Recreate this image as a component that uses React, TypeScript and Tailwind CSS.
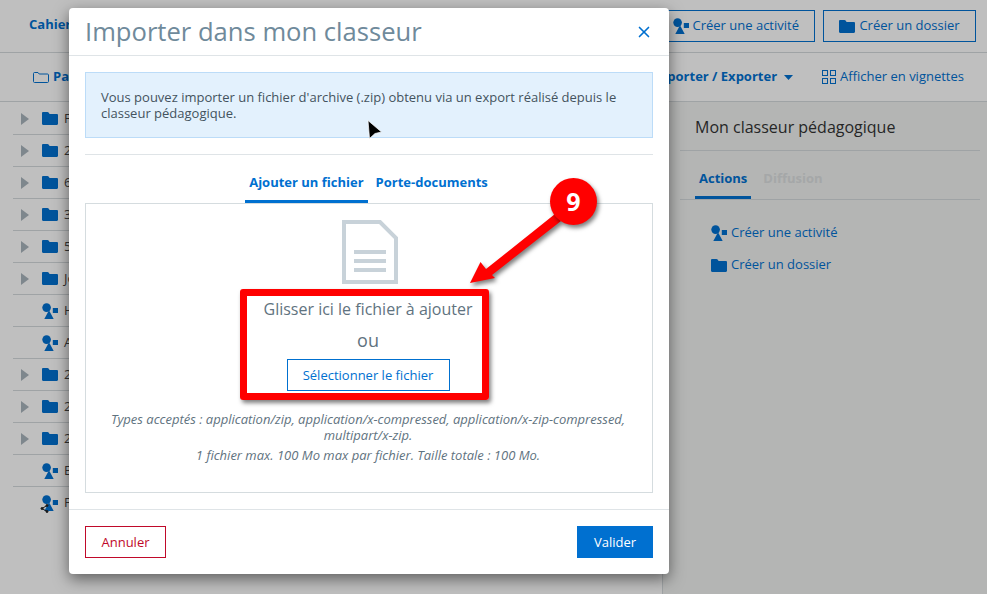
import { X } from "lucide-react";

function FolderIcon({ className }: { className?: string }) {
  return (
    <svg viewBox="0 0 16 13" className={className} fill="currentColor">
      <path d="M0 1.2C0 .5.5 0 1.2 0h4.2c.5 0 .9.2 1.2.6L7.6 2h7.2c.7 0 1.2.5 1.2 1.2v8.6c0 .7-.5 1.2-1.2 1.2H1.2C.5 13 0 12.500 0 11.800z" />
    </svg>
  );
}

function ActivityIcon({ className }: { className?: string }) {
  return (
    <svg viewBox="0 0 16 16" className={className} fill="currentColor">
      <circle cx="4.600" cy="4.600" r="4.300" />
      <path d="M7 7.300 11.700 16H2.300z" />
      <rect x="10.800" y="5" width="5.200" height="5" />
    </svg>
  );
}

const rows = [
  { t: "F", folder: true },
  { t: "2", folder: true },
  { t: "6", folder: true },
  { t: "3", folder: true },
  { t: "5", folder: true },
  { t: "Jo", folder: true },
  { t: "H", folder: false },
  { t: "A", folder: false },
  { t: "2", folder: true },
  { t: "2", folder: true },
  { t: "2", folder: true },
  { t: "E", folder: false },
  { t: "F", folder: false, shared: true },
];

function Background() {
  return (
    <div className="flex h-full flex-col">
      <div className="flex h-[53px] shrink-0 items-center justify-between border-b border-[#d5dadd] pl-[29px] pr-[11px]">
        <span className="pb-[3px] text-[13px] font-bold text-[#0070d0]">Cahier</span>
        <div className="flex gap-2">
          <button className="flex h-8 w-[155px] items-center justify-end gap-[4px] border border-[#0070d0] pr-[15px] text-[13px] text-[#0070d0]">
            <ActivityIcon className="size-4" />
            Créer une activité
          </button>
          <button className="flex h-8 w-[153px] items-center justify-center gap-[4px] border border-[#0070d0] text-[13px] text-[#0070d0]">
            <FolderIcon className="h-[13px] w-4" />
            Créer un dossier
          </button>
        </div>
      </div>
      <div className="flex h-[49px] shrink-0 items-center justify-between border-b border-[#d5dadd] pl-[33px] pr-[23px]">
        <div className="flex items-center gap-1 text-[13px] font-bold text-[#0070d0]">
          <svg viewBox="0 0 16 11" className="h-[11px] w-4" fill="none" stroke="currentColor">
            <path d="M.5 1.500c0-.6.400-1 1-1h3.500l1.200 1.500h8.300c.6 0 1 .4 1 1v6.500c0 .6-.4 1-1 1h-13c-.6 0-1-.4-1-1z" />
          </svg>
          Partager
        </div>
        <div className="flex items-center text-[13px] text-[#0070d0]">
          <span className="font-bold">Importer / Exporter</span>
          <svg viewBox="0 0 9 5" className="ml-[7px] h-[5px] w-[9px]" fill="currentColor">
            <path d="M0 0h9L4.500 5z" />
          </svg>
          <svg viewBox="0 0 14 14" className="ml-[29px] mr-1 size-[14px]" fill="none" stroke="currentColor">
            <rect x=".5" y=".5" width="5" height="5" />
            <rect x="8.500" y=".5" width="5" height="5" />
            <rect x=".5" y="8.500" width="5" height="5" />
            <rect x="8.500" y="8.500" width="5" height="5" />
          </svg>
          Afficher en vignettes
        </div>
      </div>
      <div className="flex flex-1">
        <div className="w-[662px] shrink-0 pl-[13px] pr-[20px] pt-[1px]">
          {rows.map((r, i) => (
            <div key={i} className={`flex h-8 items-center ${i < rows.length - 1 ? "border-b border-[#d5dadd]" : ""}`}>
              <div className="ml-2 w-[21px] shrink-0">
                {r.folder && (
                  <svg viewBox="0 0 8 12" className="h-3 w-2 text-[#a9b4bc]" fill="currentColor">
                    <path d="M0 0l8 6-8 6z" />
                  </svg>
                )}
              </div>
              <div className="relative">
                {r.folder ? <FolderIcon className="h-[13px] w-4 text-[#0070d0]" /> : <ActivityIcon className="size-4 text-[#0070d0]" />}
                {r.shared && (
                  <svg viewBox="0 0 9 9" className="absolute -bottom-[2px] -left-[2px] size-[9px] text-[#222]" fill="none" stroke="currentColor">
                    <path d="M7 1.500 2 4.500l5 3" />
                    <circle cx="2" cy="4.500" r="1" fill="currentColor" />
                    <circle cx="7" cy="1.500" r="1" fill="currentColor" />
                    <circle cx="7" cy="7.500" r="1" fill="currentColor" />
                  </svg>
                )}
              </div>
              <span className="ml-[6px] text-[13px] text-[#444]">{r.t}</span>
            </div>
          ))}
        </div>
        <div className="flex-1 border-l border-[#d5dadd] bg-[#f0f2f1] pl-[17px] pr-[7px]">
          <div className="flex h-[49px] items-center border-b border-[#d5dadd] pl-[15px] pt-[2px] text-base text-[#333]">
            Mon classeur pédagogique
          </div>
          <div className="flex h-[49px] items-stretch gap-[4px] border-b border-[#d5dadd] pl-[15px] text-[13px] font-bold">
            <span className="flex items-center border-b-[3px] border-[#0070d0] px-1 pt-[11px] text-[#0070d0]">Actions</span>
            <span className="flex items-center px-[8px] pt-[7px] text-[#dcdfe0]">Diffusion</span>
          </div>
          <div className="mt-[17px] flex flex-col pl-[31px] text-[13px] text-[#0070d0]">
            <div className="flex h-8 items-center gap-1">
              <ActivityIcon className="size-4" />
              Créer une activité
            </div>
            <div className="flex h-8 items-center gap-1">
              <FolderIcon className="h-[13px] w-4" />
              Créer un dossier
            </div>
          </div>
        </div>
      </div>
    </div>
  );
}

function Modal() {
  return (
    <div className="absolute left-[69px] top-2 flex h-[566px] w-[600px] flex-col rounded bg-white shadow-[0_5px_15px_rgba(0,0,0,0.5)]">
      <div className="flex h-[48px] shrink-0 items-center justify-between border-b border-[#dfe4e7] px-4">
        <h2 className="pt-[2px] text-[25.6px] text-[#6f8a9b]">Importer dans mon classeur</h2>
        <X className="size-[18px] text-[#0070d0]" strokeWidth={2.2} />
      </div>
      <div className="flex flex-1 flex-col px-4 pt-4">
        <div className="flex h-[66px] shrink-0 items-center border border-[#bcdcf8] bg-[#e3f1fd] pl-[15px] pr-4 text-[13px] leading-[16px] text-[#44535e]">
          Vous pouvez importer un fichier d'archive (.zip) obtenu via un export réalisé depuis le classeur pédagogique.
        </div>
        <div className="mt-4 border-t border-[#dfe4e7]" />
        <div className="flex h-[48px] shrink-0 justify-center gap-[4px] pr-[1px] text-[13px] font-bold text-[#0070d0]">
          <span className="flex items-center border-b-[3px] border-[#0070d0] px-1 pt-[11px]">Ajouter un fichier</span>
          <span className="flex items-center px-1 pt-[8px]">Porte-documents</span>
        </div>
        <div className="flex h-[290px] shrink-0 flex-col items-center border border-[#d5dcdf] pr-[2px] pt-4 text-[#5f7380]">
          <svg viewBox="0 0 56 64" className="ml-[3px] h-16 w-14 text-[#c8d2d9]" fill="none" stroke="currentColor" strokeWidth="4">
            <path d="M2 2h36l16 16v44H2z" />
            <path d="M12 32h32M12 41h32M12 50h32" />
          </svg>
          <p className="mt-[15px] text-base leading-[20px]">Glisser ici le fichier à ajouter</p>
          <p className="mt-[11px] text-[18px] leading-[20px]">ou</p>
          <button className="mt-[9px] h-8 w-[163px] border border-[#0070d0] pt-[1px] text-[13px] text-[#0070d0]">Sélectionner le fichier</button>
          <p className="mt-[20px] w-[530px] text-center text-[13px] italic leading-4">
            Types acceptés : application/zip, application/x-compressed, application/x-zip-compressed, multipart/x-zip.
          </p>
          <p className="mt-1 text-[13px] italic leading-4">1 fichier max. 100 Mo max par fichier. Taille totale : 100 Mo.</p>
        </div>
      </div>
      <div className="flex h-[65px] shrink-0 items-center justify-between border-t border-[#dfe4e7] px-4">
        <button className="h-8 w-[81px] border border-[#c0092a] pt-[1px] text-[13px] text-[#c0092a]">Annuler</button>
        <button className="h-8 w-[76px] bg-[#0070d0] pt-[1px] text-[13px] text-white">Valider</button>
      </div>
    </div>
  );
}

function Annotation() {
  return (
    <>
      <div className="absolute left-[240px] top-[289px] h-[111px] w-[249px] rounded-[3px] border-[7px] border-[#ff0000] shadow-[2px_3px_4px_rgba(0,0,0,0.5)]" />
      <svg viewBox="0 0 110 90" className="absolute left-[462px] top-[205px] h-[90px] w-[110px] drop-shadow-[2px_3px_2px_rgba(0,0,0,0.5)]" fill="#ff0000">
        <path d="M8 78 18.500 57 24 64 93 9 99 16 30 70 33 73z" />
      </svg>
      <div className="absolute left-[550px] top-[178px] flex size-[47px] items-center justify-center rounded-full bg-[#ff0000] text-[25px] font-bold text-white shadow-[2px_3px_4px_rgba(0,0,0,0.5)]">
        9
      </div>
      <svg viewBox="0 0 15 21" className="absolute left-[367px] top-[120px] h-[21px] w-[15px]" fill="#000" stroke="#fff" strokeWidth="0.7">
        <path d="M1 .5 14.500 12 8 13.500 2.500 18.500z" />
      </svg>
    </>
  );
}

export default function App() {
  return (
    <div className="relative h-[594px] w-[987px] overflow-hidden bg-white font-['Open_Sans',sans-serif]">
      <Background />
      <div className="absolute inset-0 bg-black/25" />
      <Modal />
      <Annotation />
    </div>
  );
}
